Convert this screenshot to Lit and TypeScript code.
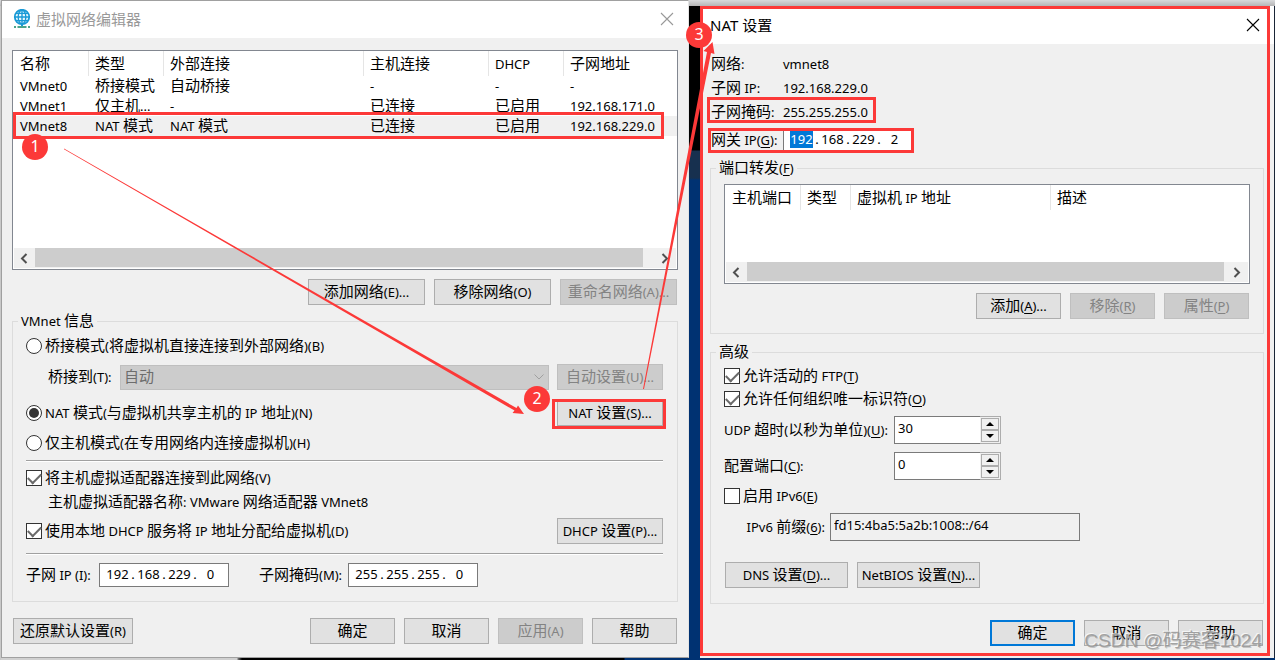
import { LitElement, html, css, svg, nothing } from "lit";
import { customElement, property } from "lit/decorators.js";

/** Renders a caption: Chinese runs get their own size, "&X" underlines the access key X. */
function caption(text: string) {
  return text
    .split(/([\u3400-\u9fff]+|&\w)/)
    .filter((part) => part !== "")
    .map((part) => {
      if (part.startsWith("&")) return html`<u>${part.slice(1)}</u>`;
      if (/^[\u3400-\u9fff]/.test(part)) return html`<span class="han">${part}</span>`;
      return part;
    });
}

const base = css`
  * { box-sizing: border-box; }
  button, input, select { font: inherit; color: inherit; margin: 0; }
  .han { font-size: 15px; line-height: 15px; }
  u { text-underline-offset: 2px; }
`;

@customElement("ip-field")
export class IpField extends LitElement {
  @property() value = "";
  @property() label = "";
  @property({ type: Number }) selected = -1;

  static styles = [
    base,
    css`
      :host { display: block; flex: none; }
      .box {
        display: flex; align-items: center; width: 130px; height: 24px;
        padding: 0 0 2px 5px; background: #fff; border: 1px solid #7a7a7a;
      }
      .octet {
        width: 23px; height: 17px; margin: 0 1px; padding: 0; border: 0;
        text-align: center; background: none; line-height: 17px;
      }
      .octet.on { background: #0078d7; color: #fff; }
      .dot { width: 6px; text-align: center; }
    `,
  ];

  render() {
    return html`<div class="box" role="group" aria-label=${this.label}>
      ${this.value.split(".").map(
        (octet, i) => html`${i ? html`<span class="dot">.</span>` : nothing}<input
            class="octet ${i === this.selected ? "on" : ""}"
            aria-label="${this.label} ${i + 1}"
            .value=${octet}
          />`
      )}
    </div>`;
  }
}

const networks = [
  ["VMnet0", "桥接模式", "自动桥接", "-", "-", "-"],
  ["VMnet1", "仅主机...", "-", "已连接", "已启用", "192.168.171.0"],
  ["VMnet8", "NAT 模式", "NAT 模式", "已连接", "已启用", "192.168.229.0"],
];

const closeIcon = svg`<svg width="14" height="14" viewBox="0 0 14 14" aria-hidden="true">
  <path d="M1 1L13 13M13 1L1 13" stroke="currentColor" stroke-width="1.1" fill="none" /></svg>`;

const arrow = (left: boolean) => html`<svg width="8" height="11" viewBox="0 0 8 11" aria-hidden="true">
  <path d=${left ? "M6.5 1L2 5.5L6.5 10" : "M1.5 1L6 5.5L1.5 10"} stroke="#505050" stroke-width="2" fill="none" /></svg>`;

@customElement("app-root")
export class AppRoot extends LitElement {
  static styles = [
    base,
    css`
      :host {
        display: block; position: relative; min-height: 100vh; color: #000;
        font: 13px/20px "Noto Sans", "Noto Sans CJK SC", sans-serif;
        background:
          linear-gradient(#d9dadc, #b5b5b6) 0 0 / 100% 6px no-repeat,
          linear-gradient(#c9c9c9, #c9c9c9) 0 0 / 1px 100% no-repeat,
          linear-gradient(90deg, #d0d0d0 237px, #777 238px, #000 242px, #000 624px, #003272 625px) 0 100% / 100% 3px no-repeat,
          linear-gradient(#000 150px, #17304f 151px, #17304f 178px, #003272 180px);
      }
      .desktop {
        display: grid; grid-template-columns: minmax(0, 688fr) minmax(0, 575fr);
        column-gap: 11px; align-items: start; padding-left: 1px;
      }
      .window { background: #f0f0f0; }
      .editor { border: 1px solid #a0a0a0; border-right-color: #e4e4e4; padding-bottom: 13px; }
      .nat { margin-top: 6px; border-right: 1px solid #1a2536; padding-bottom: 12px; }
      .titlebar {
        display: flex; align-items: center; height: 37px; padding: 0 14px 0 10px;
        background: #fff; font-size: 15px;
      }
      .nat .titlebar { height: 38px; }
      .editor .titlebar { color: #999; padding-bottom: 2px; }
      .titlebar h1 { flex: 1; margin: 0; font-size: 15px; font-weight: 400; }
      .logo { flex: none; width: 20px; height: 20px; margin-right: 4px; }
      .close { display: flex; padding: 0; border: 0; background: none; }

      .list { display: flex; flex-direction: column; background: #fff; border: 1px solid #828790; }
      .editor .list { height: 220px; margin: 12px 10px 9px; }
      .nat .list { height: 100px; margin-bottom: 9px; }
      .list table { width: 100%; table-layout: fixed; border-collapse: collapse; }
      .list th, .list td {
        height: 20px; padding: 0 0 0 7px; text-align: left; font-weight: 400;
        white-space: nowrap; overflow: hidden; line-height: 20px;
      }
      .list th { height: 25px; }
      .list th + th { background: linear-gradient(#e5e5e5, #e5e5e5) 0 0 / 1px 100% no-repeat; }
      .chosen { background: #f0f0f0; }
      .c75 { width: 75px; }
      .c50 { width: 50px; }
      .c125 { width: 125px; }
      .c200 { width: 200px; }
      .scroll { display: flex; height: 20px; margin: auto 1px 1px; background: #f0f0f0; }
      .scroll button {
        display: flex; align-items: center; justify-content: center; flex: none; width: 21px;
        padding: 0 2px 0 0; border: 0; background: none;
      }
      .nat .scroll button:last-child { width: 24px; padding: 0 0 0 2px; }
      .editor .scroll button:last-child { width: 33px; padding: 0 0 0 10px; }
      .thumb { flex: 1; height: 19px; background: #cdcdcd; }

      .btn {
        height: 26px; padding: 0 0 1px; line-height: 20px; background: #e1e1e1; border: 1px solid #adadad;
        width: 85px; white-space: nowrap; flex: none;
      }
      .btn:disabled { background: #ccc; border-color: #bfbfbf; color: #838383; }
      .wide { width: 117px; }
      .side { width: 106px; }
      .reset { width: 120px; margin-right: auto; }
      .half { width: 123px; }
      .default { border: 2px solid #0078d7; }
      .buttons { display: flex; justify-content: flex-end; gap: 9px; }
      .editor .buttons { padding: 0 11px; }
      .nat .buttons { padding-right: 1px; }

      fieldset { margin: 0; padding: 0; border: 1px solid #dcdcdc; min-width: 0; }
      legend { height: 20px; margin-left: 5px; padding: 0 3px; }
      .rows { display: grid; align-items: center; }
      .info { margin: 6px 10px 16px; }
      .info .rows {
        grid-template-rows: 30px 32px 40px 20px 16px 18px 30px 28px 18px 24px;
        padding: 0 14px 14px 13px;
      }
      .row { display: flex; align-items: center; white-space: nowrap; min-width: 0; }
      .row .side { margin-left: auto; }
      .indent { padding-left: 22px; }
      hr { width: 100%; height: 2px; margin: 0; border: 0; border-top: 1px solid #a0a0a0; border-bottom: 1px solid #fff; }

      .check { display: flex; align-items: center; gap: 3px; white-space: nowrap; }
      .tick {
        appearance: none; flex: none; width: 16px; height: 16px; background: #fff;
        border: 1px solid #333; display: grid; place-items: center;
      }
      .tick[type="radio"] { border-radius: 50%; }
      .tick[type="radio"]:checked::before { content: ""; width: 10px; height: 10px; border-radius: 50%; background: #333; }
      .tick[type="checkbox"]:checked::before {
        content: ""; width: 11px; height: 6px; margin-bottom: 3px;
        border: solid #6a6a6a; border-width: 0 0 2px 2px; transform: rotate(-45deg);
      }
      .bridge-label { width: 67px; }
      .combo { display: grid; flex: 1; margin: 0 8px 0 5px; }
      .combo select {
        grid-area: 1 / 1; appearance: none; width: 100%; height: 25px; padding: 0 3px 2px; border-radius: 0;
        border: 1px solid #bfbfbf; background: #ccc; color: #6d6d6d; opacity: 1; font-size: 15px;
      }
      .combo svg { grid-area: 1 / 1; place-self: center end; margin-right: 5px; pointer-events: none; }
      .subnet-label { width: 73px; }
      .mask-label { width: 89px; margin-left: 30px; }

      .panel { padding: 8px 10px 0 11px; }
      .facts { display: grid; grid-template-columns: 72px 1fr; grid-auto-rows: 24px; margin: 0 0 4px; align-items: center; }
      .facts dt, .facts dd { margin: 0; white-space: nowrap; }
      .gateway { margin-bottom: 6px; }
      .gateway span { width: 72px; }
      .port .body { padding: 6px 13px 14px; }
      .port { margin: 0 0 8px -1px; }
      .advanced { margin: 0 0 16px -1px; }
      .advanced .rows { grid-template-rows: 24px 22px 40px 32px 28px 34px 18px 26px; padding: 2px 14px 15px 13px; }
      .udp { width: 170px; }
      .spin { display: flex; height: 28px; width: 107px; background: #f0f0f0; border: 1px solid #adadad; }
      .spin input {
        width: 86px; margin: -1px 0 -1px -1px; padding: 0 3px 4px; background: #fff;
        border: 1px solid #7a7a7a; border-right: 0;
      }
      .steps { display: grid; flex: 1; grid-template-rows: 1fr 1fr; padding: 1px; }
      .steps button { display: grid; place-items: center; padding: 0; background: #f0f0f0; border: 1px solid #adadad; }
      .prefix-label { width: 85px; text-align: right; padding: 0 5px 0 0; margin-left: 21px; }
      .prefix { width: 250px; height: 28px; padding: 0 3px 4px; border: 1px solid #7a7a7a; background: #f0f0f0; }
      .pair { gap: 9px; padding-left: 1px; }

      .marks { position: absolute; inset: 0 auto auto 0; width: 100%; height: 660px; pointer-events: none; }
      .marks text { font-size: 16px; fill: #fff; text-anchor: middle; }
      .watermark {
        position: absolute; right: 13px; top: 629px; font: 19px/24px "Liberation Sans", "Noto Sans CJK SC", sans-serif;
        color: rgba(150, 150, 150, 0.85); text-shadow: -1px -1px 0 rgba(255, 255, 255, 0.7), 1px 1px 0 rgba(110, 110, 110, 0.35);
        pointer-events: none; white-space: nowrap;
      }
    `,
  ];

  private button(text: string, kind = "", disabled = false) {
    return html`<button class="btn ${kind}" ?disabled=${disabled}>${caption(text)}</button>`;
  }

  private radio(text: string, checked = false) {
    return html`<label class="check"><input class="tick" type="radio" name="mode" ?checked=${checked} /><span>${caption(text)}</span></label>`;
  }

  private checkbox(text: string, checked = true) {
    return html`<label class="check"><input class="tick" type="checkbox" ?checked=${checked} /><span>${caption(text)}</span></label>`;
  }

  private headings(names: [string, string][]) {
    return html`<thead><tr>${names.map(([name, width]) => html`<th class=${width} scope="col">${caption(name)}</th>`)}</tr></thead>`;
  }

  private scrollbar() {
    return html`<div class="scroll">
      <button aria-label="向左">${arrow(true)}</button><div class="thumb"></div><button aria-label="向右">${arrow(false)}</button>
    </div>`;
  }

  private spinner(id: string, value: string) {
    return html`<div class="spin"><input id=${id} .value=${value} />
      <div class="steps">
        <button aria-label="增加"><svg width="8" height="4" viewBox="0 0 8 4"><path d="M0 4L4 0L8 4Z" /></svg></button>
        <button aria-label="减少"><svg width="8" height="4" viewBox="0 0 8 4"><path d="M0 0L4 4L8 0Z" /></svg></button>
      </div></div>`;
  }

  private editor() {
    return html`<section class="window editor">
      <header class="titlebar">
        <svg class="logo" viewBox="0 0 20 20" aria-hidden="true">
          <circle cx="10" cy="8" r="7.2" fill="#e9f7fd" stroke="#1a9ad6" stroke-width="1.8" />
          <path d="M10 1V15M2.5 8H17.5M4 4.4H16M4 11.6H16" stroke="#1a9ad6" stroke-width="1.4" fill="none" />
          <ellipse cx="10" cy="8" rx="3.8" ry="7" fill="none" stroke="#1a9ad6" stroke-width="1.4" />
          <path d="M10 15V17" stroke="#1a9ad6" stroke-width="2" />
          <path d="M2 18H4M5.500 18H14.500M16 18H18" stroke="#4aa58c" stroke-width="2" />
        </svg>
        <h1>虚拟网络编辑器</h1>
        <button class="close" aria-label="关闭">${closeIcon}</button>
      </header>
      <div class="list">
        <table>
          ${this.headings([["名称", "c75"], ["类型", "c75"], ["外部连接", "c200"], ["主机连接", "c125"], ["DHCP", "c75"], ["子网地址", ""]])}
          <tbody>
            ${networks.map((row, i) => html`<tr class=${i === 2 ? "chosen" : ""}>${row.map((cell) => html`<td>${caption(cell)}</td>`)}</tr>`)}
          </tbody>
        </table>
        ${this.scrollbar()}
      </div>
      <div class="buttons">
        ${this.button("添加网络(E)...", "wide")}${this.button("移除网络(O)", "wide")}${this.button("重命名网络(A)...", "wide", true)}
      </div>
      <fieldset class="info">
        <legend>${caption("VMnet 信息")}</legend>
        <div class="rows">
          ${this.radio("桥接模式(将虚拟机直接连接到外部网络)(B)")}
          <div class="row indent">
            <label class="bridge-label" for="bridge">${caption("桥接到(T):")}</label>
            <div class="combo">
              <select id="bridge" disabled><option>自动</option></select>
              <svg width="10" height="6" viewBox="0 0 10 6"><path d="M.5 .5L5 5L9.500 .5" fill="none" stroke="#a0a0a0" /></svg>
            </div>
            ${this.button("自动设置(U)...", "side", true)}
          </div>
          <div class="row">${this.radio("NAT 模式(与虚拟机共享主机的 IP 地址)(N)", true)}${this.button("NAT 设置(S)...", "side")}</div>
          ${this.radio("仅主机模式(在专用网络内连接虚拟机)(H)")}
          <hr />
          ${this.checkbox("将主机虚拟适配器连接到此网络(V)")}
          <div class="indent">${caption("主机虚拟适配器名称: VMware 网络适配器 VMnet8")}</div>
          <div class="row">${this.checkbox("使用本地 DHCP 服务将 IP 地址分配给虚拟机(D)")}${this.button("DHCP 设置(P)...", "side")}</div>
          <hr />
          <div class="row">
            <span class="subnet-label">${caption("子网 IP (I):")}</span>
            <ip-field label="子网 IP" value="192.168.229.0"></ip-field>
            <span class="mask-label">${caption("子网掩码(M):")}</span>
            <ip-field label="子网掩码" value="255.255.255.0"></ip-field>
          </div>
        </div>
      </fieldset>
      <div class="buttons">
        ${this.button("还原默认设置(R)", "reset")}${this.button("确定")}${this.button("取消")}${this.button("应用(A)", "", true)}${this.button("帮助")}
      </div>
    </section>`;
  }

  private nat() {
    return html`<section class="window nat">
      <header class="titlebar">
        <h1>NAT 设置</h1>
        <button class="close" aria-label="关闭">${closeIcon}</button>
      </header>
      <div class="panel">
        <dl class="facts">
          <dt>${caption("网络:")}</dt><dd>vmnet8</dd>
          <dt>${caption("子网 IP:")}</dt><dd>192.168.229.0</dd>
          <dt>${caption("子网掩码:")}</dt><dd>255.255.255.0</dd>
        </dl>
        <div class="row gateway">
          <span>${caption("网关 IP(&G):")}</span>
          <ip-field label="网关 IP" value="192.168.229.2" selected="0"></ip-field>
        </div>
        <fieldset class="port">
          <legend>${caption("端口转发(&F)")}</legend>
          <div class="body">
            <div class="list">
              <table>${this.headings([["主机端口", "c75"], ["类型", "c50"], ["虚拟机 IP 地址", "c200"], ["描述", ""]])}</table>
              ${this.scrollbar()}
            </div>
            <div class="buttons">
              ${this.button("添加(&A)...")}${this.button("移除(&R)", "", true)}${this.button("属性(&P)", "", true)}
            </div>
          </div>
        </fieldset>
        <fieldset class="advanced">
          <legend>${caption("高级")}</legend>
          <div class="rows">
            ${this.checkbox("允许活动的 FTP(&T)")}
            ${this.checkbox("允许任何组织唯一标识符(&O)")}
            <div class="row"><label class="udp" for="udp">${caption("UDP 超时(以秒为单位)(&U):")}</label>${this.spinner("udp", "30")}</div>
            <div class="row"><label class="udp" for="port">${caption("配置端口(&C):")}</label>${this.spinner("port", "0")}</div>
            ${this.checkbox("启用 IPv6(&E)", false)}
            <div class="row">
              <label class="prefix-label" for="prefix">${caption("IPv6 前缀(&6):")}</label>
              <input class="prefix" id="prefix" readonly .value=${"fd15:4ba5:5a2b:1008::/64"} />
            </div>
            <span></span>
            <div class="row pair">${this.button("DNS 设置(&D)...", "half")}${this.button("NetBIOS 设置(&N)...", "half")}</div>
          </div>
        </fieldset>
        <div class="buttons">${this.button("确定", "default")}${this.button("取消")}${this.button("帮助")}</div>
      </div>
    </section>`;
  }

  private marks() {
    const badges = [[35, 147, 1], [537, 399, 2], [699, 35, 3]];
    return html`<svg class="marks" viewBox="0 0 1275 660" preserveAspectRatio="none" aria-hidden="true">
      <g fill="none" stroke="#fc3938" stroke-width="3">
        <rect x="14.500" y="113.500" width="648" height="24" />
        <rect x="553.500" y="400.500" width="111" height="27" />
        <rect x="701.500" y="7.500" width="567" height="647" />
        <rect x="708.500" y="98.500" width="166" height="23" />
        <rect x="709.500" y="129.500" width="203" height="22" />
      </g>
      <g fill="#fc3938">
        <path d="M64 148.500L516.500 408L518 405.500L524 414L512.500 413L514.500 410.500L64 149.200Z" />
        <path d="M643 389L707 52L703.500 51L712.500 42L714.500 54L711 53L644 389Z" />
        ${badges.map(([x, y]) => svg`<circle cx=${x} cy=${y} r="13" />`)}
      </g>
      ${badges.map(([x, y, n]) => svg`<text x=${x} y=${y + 5}>${n}</text>`)}
    </svg>`;
  }

  render() {
    return html`<main class="desktop">${this.editor()}${this.nat()}</main>
      ${this.marks()}
      <div class="watermark">CSDN @码赛客1024</div>`;
  }
}
